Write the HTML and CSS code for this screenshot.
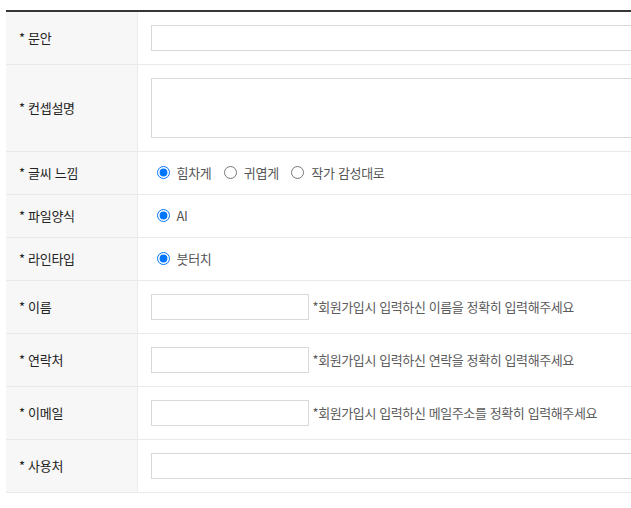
FILE: index.html
```html
<!doctype html>
<html lang="ko">
    <head>
        <meta charset="utf-8">
        <meta name="viewport" content="width=device-width, initial-scale=1">
        <title>주문 정보</title>
        <link rel="stylesheet" href="styles.css">
    </head>
    <body>
        <div class="order-form">
            <table class="form-table" cellspacing="0" cellpadding="0">
                <colgroup>
                    <col class="col-head">
                    <col>
                </colgroup>
                <tbody>
                    <tr>
                        <th>* 문안</th>
                        <td><input class="text-full" type="text"></td>
                    </tr>
                    <tr>
                        <th>* 컨셉설명</th>
                        <td><textarea class="text-area"></textarea></td>
                    </tr>
                    <tr class="choice-row">
                        <th>* 글씨 느낌</th>
                        <td>
                            <label class="choice"><input type="radio" name="feel" checked>힘차게</label>
                            <label class="choice"><input type="radio" name="feel">귀엽게</label>
                            <label class="choice"><input type="radio" name="feel">작가 감성대로</label>
                        </td>
                    </tr>
                    <tr class="choice-row">
                        <th>* 파일양식</th>
                        <td>
                            <label class="choice"><input type="radio" name="file" checked>AI</label>
                        </td>
                    </tr>
                    <tr class="choice-row">
                        <th>* 라인타입</th>
                        <td>
                            <label class="choice"><input type="radio" name="line" checked>붓터치</label>
                        </td>
                    </tr>
                    <tr>
                        <th>* 이름</th>
                        <td><input class="text-short" type="text"><span class="hint">*회원가입시 입력하신 이름을 정확히 입력해주세요</span></td>
                    </tr>
                    <tr>
                        <th>* 연락처</th>
                        <td><input class="text-short" type="text"><span class="hint">*회원가입시 입력하신 연락을 정확히 입력해주세요</span></td>
                    </tr>
                    <tr>
                        <th>* 이메일</th>
                        <td><input class="text-short" type="text"><span class="hint">*회원가입시 입력하신 메일주소를 정확히 입력해주세요</span></td>
                    </tr>
                    <tr>
                        <th>* 사용처</th>
                        <td><input class="text-full" type="text"></td>
                    </tr>
                </tbody>
            </table>
        </div>
    </body>
</html>
```

FILE: styles.css
```css
html, body { margin: 0; overflow: hidden; background: #fff; }
body { font-family: "Noto Sans CJK KR", "Noto Sans", sans-serif; color: #333; }

.order-form { padding: 10px 0 0 6px; }

.form-table { width: 690px; border-top: 2px solid #363636; border-collapse: collapse; table-layout: fixed; }
.form-table .col-head { width: 131px; }
.form-table th,
.form-table td { border-bottom: 1px solid #e9e9e9; padding: 13px 0 13px 13px; vertical-align: middle; line-height: 16px; }
.form-table th { background: #f7f7f7; border-right: 1px solid #ececec; text-align: left; font-size: 13px; font-weight: 400; letter-spacing: -0.3px; color: #222; }
.form-table td { font-size: 12px; padding-right: 14px; }

.text-full,
.text-short,
.text-area { box-sizing: border-box; border: 1px solid #d9d9d9; background: #fff; margin: 0; padding: 0 6px; font: inherit; display: block; }
.text-full { width: 100%; height: 26px; }
.text-area { width: 100%; height: 60px; resize: none; }
.text-short { width: 158px; height: 26px; display: inline-block; vertical-align: middle; }

.hint { display: inline-block; vertical-align: middle; margin-left: 4px; font-size: 13px; letter-spacing: -0.4px; color: #5c5c5c; }

.choice-row td { line-height: 15px; }
.choice { display: inline-flex; align-items: center; margin-right: 3px; font-size: 13px; letter-spacing: -0.3px; color: #555; line-height: 15px; }
.choice input { margin: 0 7px 0 6px; width: 13px; height: 13px; }
```
